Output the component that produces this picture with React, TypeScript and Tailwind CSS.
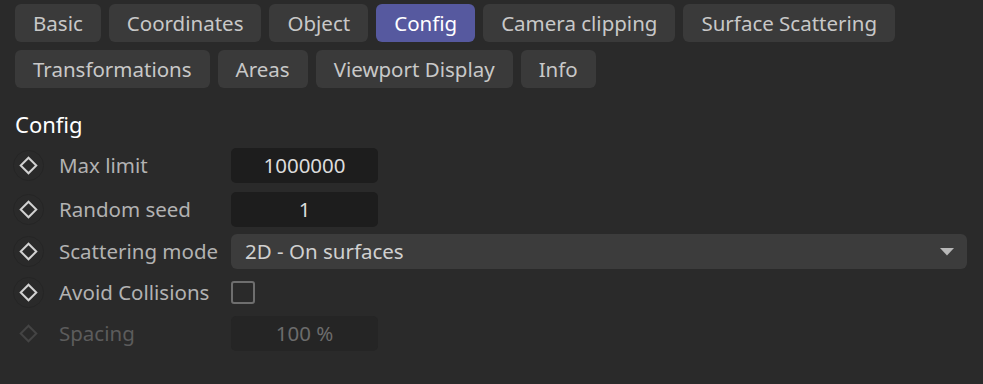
import { useState } from 'react';

const row1 = ['Basic', 'Coordinates', 'Object', 'Config', 'Camera clipping', 'Surface Scattering'];
const row2 = ['Transformations', 'Areas', 'Viewport Display', 'Info'];

const Tab = ({ label, active }: { label: string; active: boolean }) => (
  <div
    className={`h-[38px] px-[18px] flex items-center rounded-[6px] text-[20.5px] ${
      active ? 'bg-[#56599f] text-white' : 'bg-[#3a3a3a] text-[#c8c8c8]'
    }`}
  >
    {label}
  </div>
);

const Keyframe = ({ dim }: { dim?: boolean }) => (
  <div
    className={`w-[31px] h-[31px] rounded-full flex items-center justify-center ${
      dim ? '' : 'border border-[#252525]'
    }`}
  >
    <div
      className={`w-[13px] h-[13px] rotate-45 border-2 ${dim ? 'border-[#444444]' : 'border-[#d2d2d2]'}`}
    />
  </div>
);

const Row = ({
  label,
  dim,
  className,
  children,
}: {
  label: string;
  dim?: boolean;
  className?: string;
  children: React.ReactNode;
}) => (
  <div className={`flex items-center ${className ?? 'h-[35px]'}`}>
    <div className="w-[44px] pl-[13px]">
      <Keyframe dim={dim} />
    </div>
    <div className={`w-[187px] pl-[15px] text-[20.5px] ${dim ? 'text-[#5c5c5c]' : 'text-[#b2b2b2]'}`}>{label}</div>
    {children}
  </div>
);

export default function App() {
  const [avoid, setAvoid] = useState(false);

  return (
    <div className="w-[983px] h-[384px] bg-[#2a2a2a] font-['Noto_Sans',sans-serif] overflow-hidden">
      <div className="pt-[4px] pl-[15px] flex flex-col gap-[8px]">
        <div className="flex gap-[8px]">
          {row1.map(t => (
            <Tab key={t} label={t} active={t === 'Config'} />
          ))}
        </div>
        <div className="flex gap-[8px]">
          {row2.map(t => (
            <Tab key={t} label={t} active={false} />
          ))}
        </div>
      </div>

      <div className="pl-[15px] pt-[22px] text-[22px] text-white leading-[28px]">Config</div>

      <div className="mt-[10px] flex flex-col">
        <Row label="Max limit">
          <div className="w-[147px] h-[35px] rounded-[5px] bg-[#1d1d1d] text-[#dcdcdc] text-[20.5px] flex items-center justify-center">
            1000000
          </div>
        </Row>
        <Row label="Random seed" className="h-[35px] mt-[9px]">
          <div className="w-[147px] h-[35px] rounded-[5px] bg-[#1d1d1d] text-[#dcdcdc] text-[20.5px] flex items-center justify-center">
            1
          </div>
        </Row>
        <Row label="Scattering mode" className="h-[35px] mt-[7px]">
          <div className="w-[736px] h-[35px] rounded-[6px] bg-[#3c3c3c] text-[#d0d0d0] text-[20.5px] flex items-center justify-between pl-[14px] pr-[13px]">
            <span>2D - On surfaces</span>
            <svg width="14" height="8" viewBox="0 0 14 8">
              <path d="M0 0 H14 L7 7.5 Z" fill="#b8b8b8" />
            </svg>
          </div>
        </Row>
        <Row label="Avoid Collisions" className="h-[33px] mt-[7px]">
          <button
            onClick={() => setAvoid(!avoid)}
            className="w-[24px] h-[23px] rounded-[3px] border-2 border-[#6e6e6e] bg-transparent"
          />
        </Row>
        <Row label="Spacing" dim className="h-[35px] mt-[7px]">
          <div className="w-[147px] h-[35px] rounded-[5px] bg-[#252525] text-[#6c6c6c] text-[20.5px] flex items-center justify-center">
            100 %
          </div>
        </Row>
      </div>
    </div>
  );
}
